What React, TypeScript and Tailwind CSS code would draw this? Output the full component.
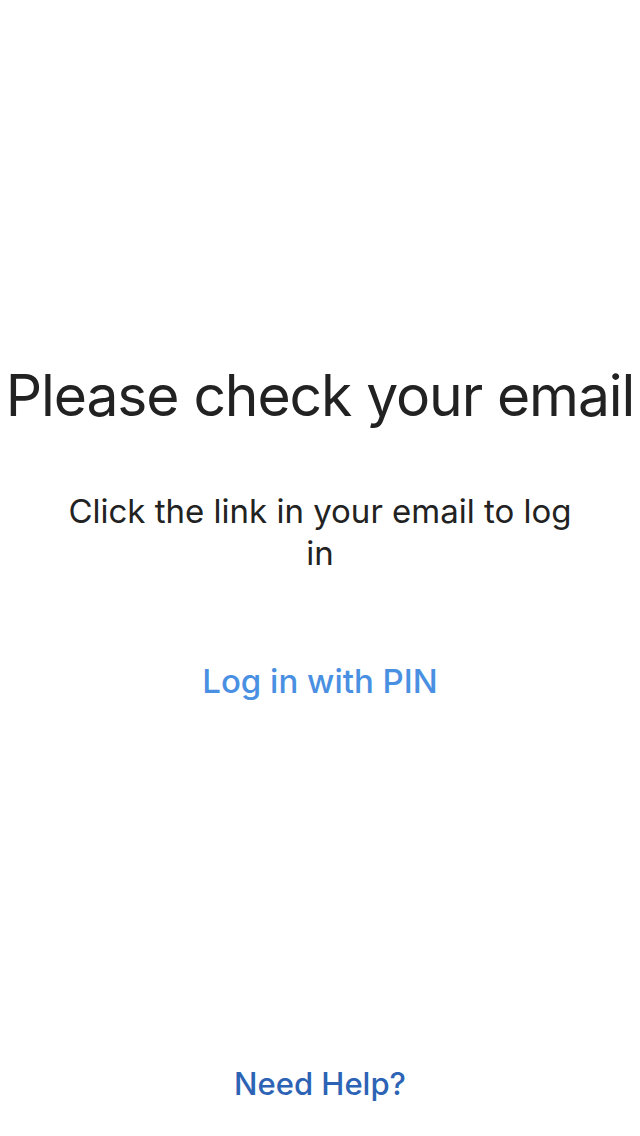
export default function App() {
  return (
    <div
      className="flex min-h-[1136px] w-[640px] flex-col items-center bg-white"
      style={{ fontFamily: 'Inter, "Noto Sans", sans-serif' }}
    >
      <div className="flex flex-1 flex-col items-center pt-[358px]">
        <h1 className="whitespace-nowrap text-[57px] font-normal leading-[76px] tracking-[-1.1px] text-[#222222]">
          Please check your email
        </h1>
        <p className="mt-[56px] w-[508px] text-center text-[33px] leading-[42px] text-[#222222]">
          Click the link in your email to log in
        </p>
        <button className="mt-[86px] text-[33px] leading-[42px] font-medium text-[#4a90e2]">
          Log in with PIN
        </button>
      </div>
      <button className="mb-[32px] text-[31px] leading-[40px] font-medium text-[#2c63b5]">
        Need Help?
      </button>
    </div>
  );
}
